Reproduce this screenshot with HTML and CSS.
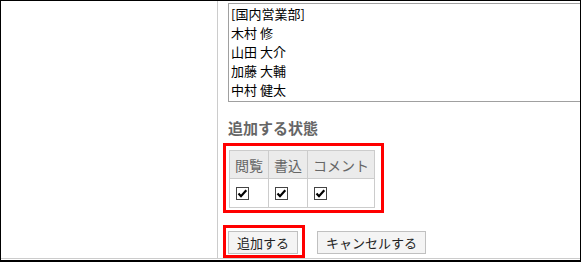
FILE: index.html
```html
<!DOCTYPE html>
<html lang="ja">
<head>
  <meta charset="UTF-8">
  <meta name="viewport" content="width=device-width, initial-scale=1.0">
  <title>追加する状態</title>
  <link rel="stylesheet" href="styles.css">
</head>
<body>
  <div class="frame">
    <div class="cell label-cell"></div>
    <div class="cell form-cell">
      <div class="listbox">
        <div class="option">[国内営業部]</div>
        <div class="option">木村 修</div>
        <div class="option">山田 大介</div>
        <div class="option">加藤 大輔</div>
        <div class="option">中村 健太</div>
      </div>

      <h3 class="section-title">追加する状態</h3>

      <div class="highlight table-highlight">
        <table class="perm-table">
          <tr>
            <th>閲覧</th>
            <th>書込</th>
            <th>コメント</th>
          </tr>
          <tr>
            <td><span class="check"><svg width="13" height="13" viewBox="0 0 13 13"><path d="M2.5 6.5 L5 9.2 L10.3 3.2" fill="none" stroke="#000" stroke-width="2.2"/></svg></span></td>
            <td><span class="check"><svg width="13" height="13" viewBox="0 0 13 13"><path d="M2.5 6.5 L5 9.2 L10.3 3.2" fill="none" stroke="#000" stroke-width="2.2"/></svg></span></td>
            <td><span class="check"><svg width="13" height="13" viewBox="0 0 13 13"><path d="M2.5 6.5 L5 9.2 L10.3 3.2" fill="none" stroke="#000" stroke-width="2.2"/></svg></span></td>
          </tr>
        </table>
      </div>

      <div class="actions">
        <div class="highlight button-highlight">
          <button class="button">追加する</button>
        </div>
        <button class="button cancel">キャンセルする</button>
      </div>
    </div>
  </div>
</body>
</html>
```

FILE: styles.css
```css
* {
  margin: 0;
  padding: 0;
  box-sizing: border-box;
}

body {
  font-family: "Noto Sans CJK JP", "Noto Sans", sans-serif;
  background-color: #fff;
  color: #000;
}

.frame {
  display: flex;
  width: 581px;
  height: 262px;
  border: 1px solid #000;
  border-bottom-width: 2px;
  padding-bottom: 1px;
  overflow: hidden;
}

.cell {
  border-bottom: 1px solid #ccc;
}

.label-cell {
  flex: 0 0 217px;
  border-right: 1px solid #ccc;
}

.form-cell {
  flex: 1 0 auto;
  padding-left: 10px;
  min-width: 0;
}

.listbox {
  width: 400px;
  margin-top: 2px;
  border: 1px solid #a0a0a0;
  padding: 0 0 2px 2px;
  font-size: 13px;
}

.option {
  height: 19px;
  line-height: 19px;
  white-space: nowrap;
}

.section-title {
  margin-top: 16px;
  font-size: 15px;
  line-height: 20px;
  font-weight: bold;
  color: #666;
}

.highlight {
  border: 3px solid #f00;
}

.table-highlight {
  width: fit-content;
  margin: 5px 0 0 -5px;
  padding: 4px 6px 2px 3px;
}

.perm-table {
  border-collapse: collapse;
  font-size: 14px;
}

.perm-table th,
.perm-table td {
  border: 1px solid #ccc;
  padding: 0 5px;
  text-align: left;
  white-space: nowrap;
}

.perm-table th {
  height: 28px;
  background-color: #ebebeb;
  color: #666;
  font-weight: normal;
  line-height: 20px;
}

.perm-table td {
  height: 29px;
}

.check {
  display: block;
  width: 13px;
  height: 13px;
  margin: 1px 0 0 1px;
  border: 1px solid #444;
  background-color: #fff;
}

.check svg {
  display: block;
  margin: -1px 0 0 -1px;
}

.actions {
  display: flex;
  align-items: flex-start;
  gap: 12px;
  margin-top: 12px;
}

.button-highlight {
  margin-left: -5px;
  padding: 3px 4px 1px 2px;
}

.button {
  display: block;
  height: 23px;
  padding: 0 8px;
  border: 1px solid #c0c0c0;
  background-color: #f4f4f4;
  color: #222;
  font-family: inherit;
  font-size: 13px;
  line-height: 21px;
}

.button.cancel {
  margin-top: 6px;
}
```
